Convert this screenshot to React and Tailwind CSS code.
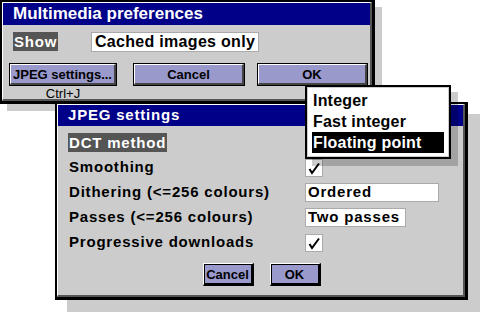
import React from 'react';

const Win = ({ className, title, titleClass, children }) => (
  <div className={`absolute bg-[#cccccc] border-black border-l-2 border-t-2 border-r-[3px] border-b-[3px] ${className}`}>
    <div className="h-full flex flex-col border-l border-t border-l-white border-t-white border-r-2 border-b-2 border-r-[#555555] border-b-[#555555]">
      <div className={`bg-[#000088] text-white font-bold flex items-center pl-[10px] ${titleClass}`}>{title}</div>
      {children}
    </div>
  </div>
);

const Btn = ({ className, children }) => (
  <div className={`border border-black ${className}`}>
    <div className="h-full flex items-center justify-center bg-[#9999cc] border-l border-t border-l-white border-t-white border-r-2 border-b-2 border-r-[#444444] border-b-[#444444] text-[13px] font-bold leading-none">
      {children}
    </div>
  </div>
);

const SmallBtn = ({ children }) => (
  <div className="h-[23px] w-[51px] border-l border-t border-l-white border-t-white border-r-2 border-b-2 border-r-black border-b-black">
    <div className="h-full flex items-center justify-center bg-[#9999cc] border border-black text-[13px] font-bold leading-none">
      {children}
    </div>
  </div>
);

const Field = ({ className, children }) => (
  <div className={`h-[19px] bg-white border border-[#aaaaaa] flex items-center pl-[2px] ${className}`}>{children}</div>
);

const Check = () => (
  <div className="w-[18px] h-[18px] bg-white border border-[#aaaaaa] flex items-center justify-center">
    <svg width="14" height="14" viewBox="0 0 14 14">
      <path d="M2.5 8 L5 12 L12 2.5" fill="none" stroke="black" strokeWidth="2" />
    </svg>
  </div>
);

const Row = ({ h = 'h-[25px]', label, children }) => (
  <div className={`grid grid-cols-[236px_1fr] items-center ${h}`}>
    <div>{label}</div>
    <div>{children}</div>
  </div>
);

export default function App() {
  return (
    <div className="relative w-[481px] h-[312px] bg-white overflow-hidden font-['Liberation_Sans',Arial,sans-serif] text-black">
      <Win
        className="left-0 top-0 w-[375px] h-[104px] shadow-[7px_7px_0_rgba(0,0,0,0.2)]"
        title="Multimedia preferences"
        titleClass="h-[22px] text-[17px]"
      >
        <div className="flex items-center h-[20px] mt-[7px] pl-[10px] text-[15px] font-bold tracking-[0.8px]">
          <div className="w-[78px]">
            <span className="bg-[#555555] text-white px-[1px] py-[1px]">Show</span>
          </div>
          <Field className="w-[168px] h-[20px] text-[16px] tracking-[0.3px] pl-[3px]">Cached images only</Field>
        </div>
        <div className="flex mt-[11px] pl-[6px]">
          <div className="flex flex-col items-center">
            <Btn className="w-[108px] h-[23px]">JPEG settings...</Btn>
            <div className="text-[13px] leading-[14px] mt-[1px]">Ctrl+J</div>
          </div>
          <Btn className="w-[112px] h-[23px] ml-[16px]">Cancel</Btn>
          <Btn className="w-[111px] h-[23px] ml-[12px]">OK</Btn>
        </div>
      </Win>

      <Win
        className="left-[55px] top-[102px] w-[413px] h-[198px] shadow-[12px_12px_0_rgba(0,0,0,0.2)]"
        title="JPEG settings"
        titleClass="h-[21px] text-[15px] tracking-[0.8px]"
      >
        <div className="flex flex-col mt-[5px] pl-[11px] text-[15px] font-bold tracking-[0.8px]">
          <Row h="h-[24px]" label={<span className="bg-[#555555] text-white -ml-[1px] px-[1px] py-[1px]">DCT method</span>}>
            {/* value field sits under the open menu */}
            <Field className="w-[133px]" />
          </Row>
          <Row label="Smoothing"><Check /></Row>
          <Row label="Dithering (<=256 colours)"><Field className="w-[134px]">Ordered</Field></Row>
          <Row label="Passes (<=256 colours)"><Field className="w-[101px]">Two passes</Field></Row>
          <Row label="Progressive downloads"><Check /></Row>
        </div>
        <div className="flex justify-center gap-[16px] mt-[8px] pl-[2px]">
          <SmallBtn>Cancel</SmallBtn>
          <SmallBtn>OK</SmallBtn>
        </div>
      </Win>

      <div className="absolute left-[305px] top-[85px] w-[146px] border-2 border-black bg-white shadow-[7px_7px_0_rgba(0,0,0,0.2)]">
        <div className="border border-[#cccccc] pt-[2px] pb-[3px] px-[4px] text-[16px] font-bold tracking-[0.2px]">
          <div className="h-[21px] flex items-center pl-[1px]">Integer</div>
          <div className="h-[21px] flex items-center pl-[1px]">Fast integer</div>
          <div className="h-[21px] flex items-center pl-[1px] bg-black text-white">Floating point</div>
        </div>
      </div>
    </div>
  );
}
